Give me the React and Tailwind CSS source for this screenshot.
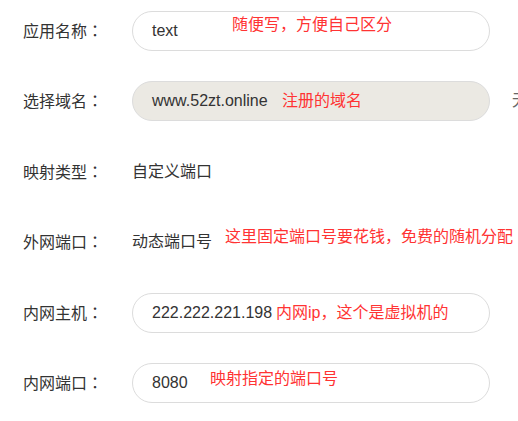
import React from "react";

const font = { fontFamily: '"Liberation Sans", "Noto Sans CJK SC", sans-serif' };

const Note = ({ left, dy = 0, children }) => (
	<span
		className="absolute top-1/2 text-[16px] leading-none text-[#ff3333] whitespace-nowrap"
		style={{ left, transform: `translateY(calc(-50% + ${dy}px))` }}
	>
		{children}
	</span>
);

const Row = ({ label, children }) => (
	<div className="relative flex items-center h-10">
		<div className="w-[109px] shrink-0 text-[16px] text-[#333]">
			{label}
			<span className="font-['Noto_Sans_CJK_JP',sans-serif]">：</span>
		</div>
		{children}
	</div>
);

const Field = ({ value, disabled }) => (
	<div
		className={`w-[358px] h-10 flex items-center px-[19px] rounded-full border border-[#dcdcdc] text-[16px] text-[#333] ${
			disabled ? "bg-[#ebe9e3]" : "bg-white"
		}`}
	>
		{value}
	</div>
);

export default function App() {
	return (
		<div className="w-[518px] h-[421px] overflow-hidden bg-white" style={font}>
			<div className="flex flex-col gap-y-[30.4px] pt-[11px] pl-[23px]">
				{/* 应用名称 */}
				<Row label="应用名称">
					<Field value="text" />
					<Note left={209} dy={-6}>随便写，方便自己区分</Note>
				</Row>

				{/* 选择域名 */}
				<Row label="选择域名">
					<Field value="www.52zt.online" disabled />
					<Note left={259}>注册的域名</Note>
					<span className="absolute left-[489px] text-[16px] text-[#666] whitespace-nowrap">无需备案</span>
				</Row>

				<Row label="映射类型">
					<span className="text-[16px] text-[#333]">自定义端口</span>
				</Row>

				<Row label="外网端口">
					<span className="text-[16px] text-[#333]">动态端口号</span>
					<Note left={202} dy={-5}>这里固定端口号要花钱，免费的随机分配</Note>
				</Row>

				<Row label="内网主机">
					<Field value="222.222.221.198" />
					<Note left={253}>内网ip，这个是虚拟机的</Note>
				</Row>

				<Row label="内网端口">
					<Field value="8080" />
					<Note left={187} dy={-4}>映射指定的端口号</Note>
				</Row>
			</div>
		</div>
	);
}
